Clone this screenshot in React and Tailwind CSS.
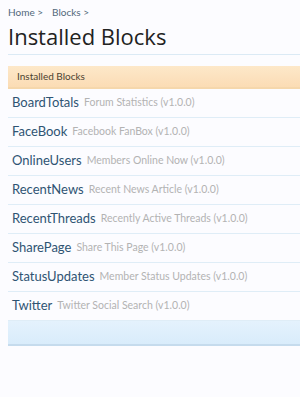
const blocks = [
  { name: 'BoardTotals', desc: 'Forum Statistics' },
  { name: 'FaceBook', desc: 'Facebook FanBox' },
  { name: 'OnlineUsers', desc: 'Members Online Now' },
  { name: 'RecentNews', desc: 'Recent News Article' },
  { name: 'RecentThreads', desc: 'Recently Active Threads' },
  { name: 'SharePage', desc: 'Share This Page' },
  { name: 'StatusUpdates', desc: 'Member Status Updates' },
  { name: 'Twitter', desc: 'Twitter Social Search' },
]

export default function App() {
  return (
    <div
      className="min-h-[397px] w-[300px] bg-[#fcfcff] pl-2 pt-[5px]"
      style={{ fontFamily: 'Lato, "Open Sans", sans-serif' }}
    >
      {/* Breadcrumb */}
      <div className="flex items-center gap-[9px] text-[10px] leading-[14px] text-[#51687a]">
        <span>Home &gt;</span>
        <span>Blocks &gt;</span>
      </div>

      {/* Title */}
      <h1
        className="mt-[3px] border-b border-[#dbeaf5] pb-[4px] text-[22px] leading-[28px] text-[#222222]"
        style={{ fontFamily: '"Open Sans", sans-serif' }}
      >
        Installed Blocks
      </h1>

      {/* Section */}
      <div className="mt-[11px]">
        <div className="h-[23px] border-b-2 border-[#f5d7ac] bg-gradient-to-b from-[#fde8c9] to-[#fbdcb5] pl-[9px] text-[10px] leading-[21px] text-[#4b4231]">
          Installed Blocks
        </div>

        <ul>
          {blocks.map((b) => (
            <li
              key={b.name}
              className="flex h-[29px] items-center gap-[5px] border-b border-[#dfedf7] pl-[4px]"
            >
              <span className="text-[13px] text-[#2f5473]">{b.name}</span>
              <span className="text-[10.5px] text-[#b3b3b3]">{b.desc} (v1.0.0)</span>
            </li>
          ))}
        </ul>

        <div className="h-[25px] border-b-2 border-[#c5dbed] bg-gradient-to-b from-[#e4f2fd] to-[#d9ecfb]" />
      </div>
    </div>
  )
}
